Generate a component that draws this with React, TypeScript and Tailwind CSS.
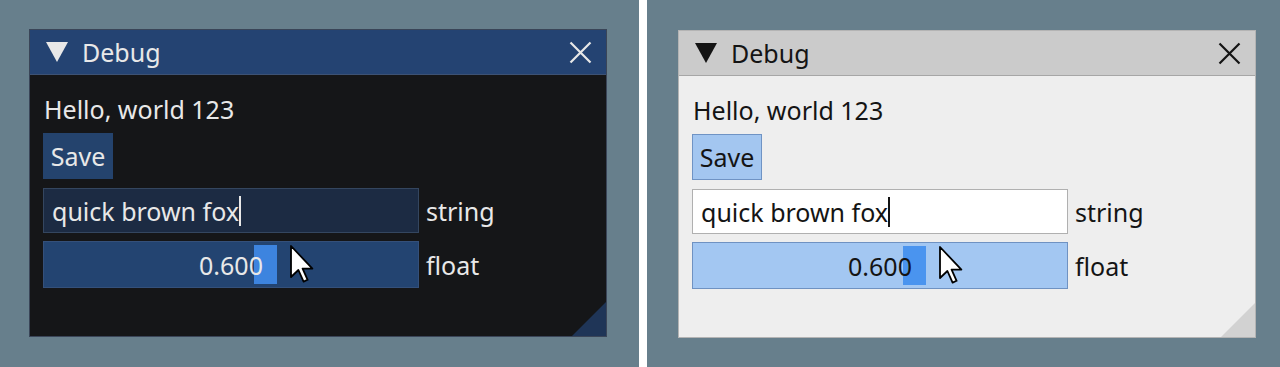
import React from "react"

type Theme = "dark" | "light"

const styles = {
  dark: {
    window: "bg-[#151618] border-[#3a4558] text-[#e8e8e8]",
    title: "bg-[#244372] border-[#3d5274] text-[#e8e8e8]",
    icon: "#e8e8e8",
    button: "bg-[#24436d] border-[#24436d]",
    input: "bg-[#1c2b43] border-[#34465f]",
    slider: "bg-[#234471] border-[#34507a]",
    grab: "bg-[#3d84df]",
    grip: "#1f3557",
  },
  light: {
    window: "bg-[#eeeeee] border-[#b4b4b4] text-[#141414]",
    title: "bg-[#cbcbcb] border-[#a6a6a6] text-[#141414]",
    icon: "#141414",
    button: "bg-[#a3c6f0] border-[#6f93c4]",
    input: "bg-white border-[#b0b0b0]",
    slider: "bg-[#a3c7f2] border-[#6f92c2]",
    grab: "bg-[#4a94ef]",
    grip: "#d2d2d2",
  },
}

function Cursor() {
  return (
    <svg className="absolute left-[246px] top-[3px]" width="24" height="38" viewBox="0 0 12 19">
      <path
        d="M0.5 0.5 L0.5 16 L4.2 12.5 L6.8 18.3 L8.8 17.4 L6.3 11.8 L11.2 11.8 Z"
        fill="white"
        stroke="black"
        strokeWidth="0.9"
        strokeLinejoin="round"
      />
    </svg>
  )
}

function DebugWindow({ theme }: { theme: Theme }) {
  const s = styles[theme]
  const value = 0.6
  const grabLeft = 4 + value * (374 - 8 - 23)

  return (
    <div className={`relative w-[578px] h-[308px] border ${s.window} font-['Noto_Sans',sans-serif]`}>
      <div className={`h-[45px] border-b flex items-center pl-[16px] pr-[14px] ${s.title}`}>
        <svg width="22" height="20" viewBox="0 0 22 20">
          <path d="M0 0 H22 L11 20 Z" fill={s.icon} />
        </svg>
        <span className="ml-[14px] text-[25px] leading-[32px] -mt-[1px]">Debug</span>
        <svg className="ml-auto" width="23" height="23" viewBox="0 0 23 23">
          <path d="M1.5 1.5 L21.5 21.5 M21.5 1.5 L1.5 21.5" stroke={s.icon} strokeWidth="2.2" />
        </svg>
      </div>

      <div className="pl-[13px] pt-[18px] flex flex-col text-[25px]">
        <div className="leading-[32px] pl-[1px]">Hello, world 123</div>

        <div className={`mt-[8px] w-[70px] h-[46px] border flex items-center justify-center leading-[32px] ${s.button}`}>
          Save
        </div>

        <div className="mt-[9px] flex items-center gap-[7px]">
          <div className={`w-[376px] h-[45px] border flex items-center pl-[8px] leading-[32px] ${s.input}`}>
            <span>quick brown fox</span>
            <span className={`w-[2px] h-[30px] ${theme === "dark" ? "bg-[#e8e8e8]" : "bg-[#141414]"}`} />
          </div>
          <span className="leading-[32px]">string</span>
        </div>

        <div className="mt-[8px] flex items-center gap-[7px]">
          <div className={`relative w-[376px] h-[47px] border flex items-center justify-center leading-[32px] ${s.slider}`}>
            <div className={`absolute top-[3px] w-[23px] h-[39px] ${s.grab}`} style={{ left: grabLeft }} />
            <span className="relative">0.600</span>
            <Cursor />
          </div>
          <span className="leading-[32px]">float</span>
        </div>
      </div>

      <svg className="absolute right-0 bottom-0" width="34" height="34" viewBox="0 0 34 34">
        <path d="M34 0 V34 H0 Z" fill={s.grip} />
      </svg>
    </div>
  )
}

export default function App() {
  return (
    <div className="w-[1280px] h-[367px] flex bg-[#677f8c] overflow-hidden">
      <div className="w-[639px] pl-[29px] pt-[29px]">
        <DebugWindow theme="dark" />
      </div>
      <div className="w-[8px] bg-white" />
      <div className="flex-1 pl-[31px] pt-[30px]">
        <DebugWindow theme="light" />
      </div>
    </div>
  )
}
